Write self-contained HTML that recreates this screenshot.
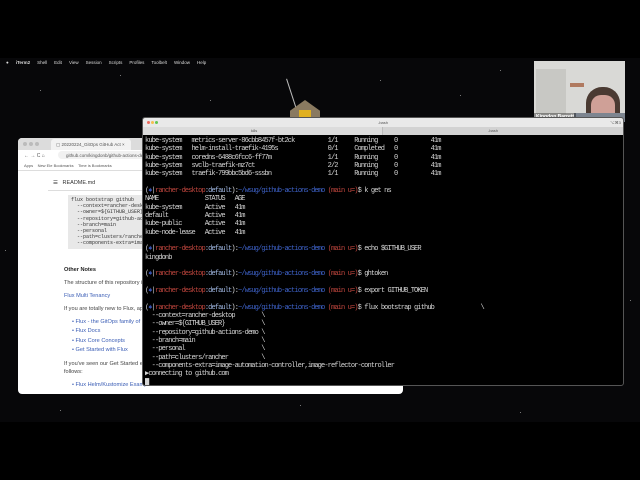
<!DOCTYPE html>
<html><head><meta charset="utf-8"><style>
*{margin:0;padding:0;box-sizing:border-box}
body{width:640px;height:480px;background:#000;position:relative;overflow:hidden;font-family:"Liberation Sans",sans-serif}
.desk{position:absolute;left:0;top:58px;width:640px;height:364px;background:#070709}
.menu{position:absolute;left:0;top:58px;width:640px;height:10px;color:#ddd;font-size:4.5px;line-height:10px;white-space:nowrap}
.menu span{margin-right:7px}
.star{position:absolute;width:1px;height:1px;background:#777}
.cam{position:absolute;left:534px;top:61px;width:91px;height:61px;background:#d9d9d6;overflow:hidden}
.br{position:absolute;left:18px;top:138px;width:385px;height:256px;background:#fff;border-radius:4px;overflow:hidden}
.term{position:absolute;left:142px;top:117px;width:482px;height:269px;background:#000;border:1px solid #555;border-radius:3px;overflow:hidden}
pre{position:absolute;left:2px;top:19px;font-family:"Liberation Mono",monospace;font-size:7px;letter-spacing:-0.88px;line-height:8.33px;color:#d6d6d6}
.r{color:#c0463e}.b{color:#3e62c8}.c{color:#9fb6e0}.h{color:#4b6ff0}
.bt{position:absolute;font-size:4.5px;color:#555;white-space:nowrap}
.code{position:absolute;left:50px;top:57px;width:80px;height:54px;background:#e8e8e8;font-family:"Liberation Mono",monospace;font-size:5px;line-height:6.2px;color:#333;padding:2px 3px;white-space:pre}
.tx{position:absolute;left:46px;font-size:5.6px;color:#444;white-space:nowrap}
.ln{color:#3a5db5}
</style></head><body>
<div class="desk"></div>
<div class="star" style="left:40px;top:90px"></div><div class="star" style="left:120px;top:75px"></div><div class="star" style="left:210px;top:100px"></div><div class="star" style="left:380px;top:80px"></div><div class="star" style="left:460px;top:95px"></div><div class="star" style="left:500px;top:70px"></div><div class="star" style="left:60px;top:410px"></div><div class="star" style="left:300px;top:405px"></div><div class="star" style="left:520px;top:412px"></div><div class="star" style="left:630px;top:300px"></div><div class="star" style="left:5px;top:250px"></div>
<div style="position:absolute;left:291px;top:78px;width:1px;height:32px;background:#bbb;transform:rotate(-18deg)"></div>
<div style="position:absolute;left:290px;top:100px;width:30px;height:18px;background:#8a7a60;clip-path:polygon(50% 0,100% 60%,100% 100%,0 100%,0 60%)"></div>
<div style="position:absolute;left:299px;top:110px;width:12px;height:7px;background:#e0b020"></div>
<div class="menu"><span style="margin-left:6px">&#9679;</span><span style="font-weight:bold">iTerm2</span><span>Shell</span><span>Edit</span><span>View</span><span>Session</span><span>Scripts</span><span>Profiles</span><span>Toolbelt</span><span>Window</span><span>Help</span></div>
<div class="cam"><div style="position:absolute;left:2px;top:8px;width:30px;height:45px;background:#c8c8c4"></div><div style="position:absolute;left:36px;top:22px;width:14px;height:4px;background:#b07a60"></div><div style="position:absolute;left:52px;top:26px;width:34px;height:40px;background:#4a3a32;border-radius:16px 16px 4px 4px"></div><div style="position:absolute;left:57px;top:34px;width:24px;height:28px;background:#cfa097;border-radius:10px"></div><div style="position:absolute;left:40px;top:52px;width:51px;height:12px;background:#7d8590"></div><div style="position:absolute;left:0;top:52px;width:42px;height:9px;background:rgba(0,0,0,.35)"></div><div style="position:absolute;left:2px;top:53px;font-size:5px;color:#fff;font-weight:bold;white-space:nowrap">Kingdon Barrett</div></div>

<div class="br">
<div style="position:absolute;left:0;top:0;width:385px;height:12px;background:#dcdcdc"></div>
<div style="position:absolute;left:5px;top:4px;width:4px;height:4px;border-radius:50%;background:#bbb;box-shadow:6px 0 #bbb,12px 0 #bbb"></div>
<div style="position:absolute;left:33px;top:1px;width:80px;height:11px;background:#f2f2f2;border-radius:3px 3px 0 0"></div>
<div class="bt" style="left:38px;top:4px">&#9634; 20220224_GitOps GitHub Act  ×</div>
<div class="bt" style="left:6px;top:15px;font-size:5px">&#8592; &#8594; C &#8962;</div>
<div style="position:absolute;left:40px;top:13px;width:340px;height:8px;background:#f1f1f1;border-radius:4px"></div>
<div class="bt" style="left:48px;top:15px">github.com/kingdonb/github-actions-demo</div>
<div class="bt" style="left:6px;top:25px;font-size:4px">Apps &nbsp;&nbsp; New Ele Bookmarks &nbsp;&nbsp; Time is Bookmarks</div>
<div style="position:absolute;left:0;top:32px;width:385px;height:1px;background:#ddd"></div>
<div class="bt" style="left:35px;top:42px;font-size:5.5px;color:#333">&#9776; &nbsp; README.md</div>
<div style="position:absolute;left:30px;top:52px;width:355px;height:1px;background:#ddd"></div>
<div class="code">flux bootstrap github
  --context=rancher-desktop
  --owner=${GITHUB_USER}
  --repository=github-actions
  --branch=main
  --personal
  --path=clusters/rancher
  --components-extra=image-</div>
<div class="tx" style="top:129px;font-weight:bold;color:#222">Other Notes</div>
<div class="tx" style="top:142px">The structure of this repository is</div>
<div class="tx ln" style="top:155px">Flux Multi Tenancy</div>
<div class="tx" style="top:168px">If you are totally new to Flux, apo</div>
<div class="tx ln" style="top:181px;left:54px">• Flux - the GitOps family of p</div>
<div class="tx ln" style="top:190px;left:54px">• Flux Docs</div>
<div class="tx ln" style="top:200px;left:54px">• Flux Core Concepts</div>
<div class="tx ln" style="top:209px;left:54px">• Get Started with Flux</div>
<div class="tx" style="top:223px">If you've seen our Get Started ex</div>
<div class="tx" style="top:231px">follows:</div>
<div class="tx ln" style="top:244px;left:54px">• Flux Helm/Kustomize Example</div>
</div>

<div class="term">
<div style="position:absolute;left:0;top:0;width:482px;height:9px;background:#e9e9e9"></div>
<div style="position:absolute;left:4px;top:3px;width:3px;height:3px;border-radius:50%;background:#ec6a5e;box-shadow:4px 0 #f4bf4f,8px 0 #61c554"></div>
<div class="bt" style="left:235px;top:2px;font-size:4px">-bash</div>
<div class="bt" style="left:467px;top:2px;font-size:4px">⌥⌘3</div>
<div style="position:absolute;left:0;top:9px;width:482px;height:8px;background:#d2d2d2"></div>
<div style="position:absolute;left:0;top:9px;width:240px;height:8px;background:#dcdcdc;border-right:1px solid #bbb"></div>
<div class="bt" style="left:108px;top:10px;font-size:4px">k8s</div>
<div class="bt" style="left:345px;top:10px;font-size:4px">-bash</div>
<pre>kube-system   metrics-server-86cbb8457f-bt2ck          1/1     Running     0          41m
kube-system   helm-install-traefik-4195s               0/1     Completed   0          41m
kube-system   coredns-6488c6fcc6-ff77m                 1/1     Running     0          41m
kube-system   svclb-traefik-mz7ct                      2/2     Running     0          41m
kube-system   traefik-799bbc5bd6-sssbn                 1/1     Running     0          41m

(<span class="h">⎈</span>|<span class="r">rancher-desktop</span><span class="c">:default</span>):<span class="b">~/wsug/github-actions-demo</span> <span class="r">(main u=)</span>$ k get ns
NAME              STATUS   AGE
kube-system       Active   41m
default           Active   41m
kube-public       Active   41m
kube-node-lease   Active   41m

(<span class="h">⎈</span>|<span class="r">rancher-desktop</span><span class="c">:default</span>):<span class="b">~/wsug/github-actions-demo</span> <span class="r">(main u=)</span>$ echo $GITHUB_USER
kingdonb

(<span class="h">⎈</span>|<span class="r">rancher-desktop</span><span class="c">:default</span>):<span class="b">~/wsug/github-actions-demo</span> <span class="r">(main u=)</span>$ ghtoken

(<span class="h">⎈</span>|<span class="r">rancher-desktop</span><span class="c">:default</span>):<span class="b">~/wsug/github-actions-demo</span> <span class="r">(main u=)</span>$ export GITHUB_TOKEN

(<span class="h">⎈</span>|<span class="r">rancher-desktop</span><span class="c">:default</span>):<span class="b">~/wsug/github-actions-demo</span> <span class="r">(main u=)</span>$ flux bootstrap github              \
  --context=rancher-desktop        \
  --owner=${GITHUB_USER}           \
  --repository=github-actions-demo \
  --branch=main                    \
  --personal                       \
  --path=clusters/rancher          \
  --components-extra=image-automation-controller,image-reflector-controller
▶connecting to github.com
█</pre>
</div>
</body></html>
